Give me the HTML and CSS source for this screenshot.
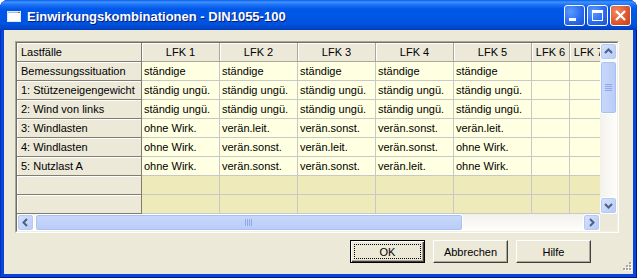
FILE: index.html
```html
<!DOCTYPE html>
<html lang="de">
  <head>
    <meta charset="UTF-8" />
    <title>Einwirkungskombinationen - DIN1055-100</title>
    <link rel="stylesheet" href="styles.css">
  </head>
  <body>
    <div class="window">
      <div class="titlebar">
        <svg class="app-icon" width="16" height="16" viewBox="0 0 16 16">
          <rect x="1.5" y="3.5" width="13" height="10" fill="#fff" stroke="#dfe8fb" />
          <rect x="2" y="4" width="12" height="1" fill="#9fbdf5" />
          <rect x="12" y="4" width="2" height="1" fill="#d24a2a" />
        </svg>
        <span class="title">Einwirkungskombinationen - DIN1055-100</span>
        <div class="caption-buttons">
          <div class="cap-btn">
            <svg width="21" height="21" viewBox="0 0 21 21"><rect x="5" y="13" width="7" height="3" fill="#fff" /></svg>
          </div>
          <div class="cap-btn">
            <svg width="21" height="21" viewBox="0 0 21 21"><rect x="5.5" y="5.5" width="10" height="10" fill="none" stroke="#fff" /><rect x="5" y="5" width="11" height="3" fill="#fff" /></svg>
          </div>
          <div class="cap-btn close">
            <svg width="21" height="21" viewBox="0 0 21 21"><path d="M6 6 L15 15 M15 6 L6 15" stroke="#fff" stroke-width="2.2" /></svg>
          </div>
        </div>
      </div>

      <div class="client">
        <div class="grid-frame">
          <div class="grid-inner">
            <div class="viewport">
              <div class="sheet">
                <div class="cell hd left">Lastfälle</div>
                <div class="cell hd">LFK 1</div>
                <div class="cell hd">LFK 2</div>
                <div class="cell hd">LFK 3</div>
                <div class="cell hd">LFK 4</div>
                <div class="cell hd">LFK 5</div>
                <div class="cell hd">LFK 6</div>
                <div class="cell hd">LFK 7</div>

                <div class="cell rh">Bemessungssituation</div>
                <div class="cell">ständige</div>
                <div class="cell">ständige</div>
                <div class="cell">ständige</div>
                <div class="cell">ständige</div>
                <div class="cell">ständige</div>
                <div class="cell"></div>
                <div class="cell"></div>

                <div class="cell rh">1: Stützeneigengewicht</div>
                <div class="cell">ständig ungü.</div>
                <div class="cell">ständig ungü.</div>
                <div class="cell">ständig ungü.</div>
                <div class="cell">ständig ungü.</div>
                <div class="cell">ständig ungü.</div>
                <div class="cell"></div>
                <div class="cell"></div>

                <div class="cell rh">2: Wind von links</div>
                <div class="cell">ständig ungü.</div>
                <div class="cell">ständig ungü.</div>
                <div class="cell">ständig ungü.</div>
                <div class="cell">ständig ungü.</div>
                <div class="cell">ständig ungü.</div>
                <div class="cell"></div>
                <div class="cell"></div>

                <div class="cell rh">3: Windlasten</div>
                <div class="cell">ohne Wirk.</div>
                <div class="cell">verän.leit.</div>
                <div class="cell">verän.sonst.</div>
                <div class="cell">verän.sonst.</div>
                <div class="cell">verän.leit.</div>
                <div class="cell"></div>
                <div class="cell"></div>

                <div class="cell rh">4: Windlasten</div>
                <div class="cell">ohne Wirk.</div>
                <div class="cell">verän.sonst.</div>
                <div class="cell">verän.leit.</div>
                <div class="cell">verän.sonst.</div>
                <div class="cell">ohne Wirk.</div>
                <div class="cell"></div>
                <div class="cell"></div>

                <div class="cell rh">5: Nutzlast A</div>
                <div class="cell">ohne Wirk.</div>
                <div class="cell">verän.sonst.</div>
                <div class="cell">verän.sonst.</div>
                <div class="cell">verän.leit.</div>
                <div class="cell">ohne Wirk.</div>
                <div class="cell"></div>
                <div class="cell"></div>

                <div class="cell rh"></div>
                <div class="cell blank"></div>
                <div class="cell blank"></div>
                <div class="cell blank"></div>
                <div class="cell blank"></div>
                <div class="cell blank"></div>
                <div class="cell blank"></div>
                <div class="cell blank"></div>

                <div class="cell rh"></div>
                <div class="cell blank"></div>
                <div class="cell blank"></div>
                <div class="cell blank"></div>
                <div class="cell blank"></div>
                <div class="cell blank"></div>
                <div class="cell blank"></div>
                <div class="cell blank"></div>
              </div>
            </div>

            <div class="vscroll">
              <div class="sb-btn">
                <svg width="15" height="15" viewBox="0 0 15 15"><path d="M4 9 L7.5 5.5 L11 9" fill="none" stroke="#4d6185" stroke-width="2" /></svg>
              </div>
              <div class="sb-thumb v">
                <svg width="8" height="8" viewBox="0 0 8 8"><path d="M0 0.5 H7 M0 2.5 H7 M0 4.5 H7 M0 6.5 H7" stroke="#8ea9e8" /></svg>
              </div>
              <div class="sb-track"></div>
              <div class="sb-btn">
                <svg width="15" height="15" viewBox="0 0 15 15"><path d="M4 6 L7.5 9.5 L11 6" fill="none" stroke="#4d6185" stroke-width="2" /></svg>
              </div>
            </div>

            <div class="hscroll">
              <div class="sb-btn">
                <svg width="15" height="15" viewBox="0 0 15 15"><path d="M9 4 L5.5 7.5 L9 11" fill="none" stroke="#4d6185" stroke-width="2" /></svg>
              </div>
              <div class="sb-thumb h">
                <svg width="8" height="8" viewBox="0 0 8 8"><path d="M0.5 0 V7 M2.5 0 V7 M4.5 0 V7 M6.5 0 V7" stroke="#8ea9e8" /></svg>
              </div>
              <div class="sb-track"></div>
              <div class="sb-btn">
                <svg width="15" height="15" viewBox="0 0 15 15"><path d="M6 4 L9.5 7.5 L6 11" fill="none" stroke="#4d6185" stroke-width="2" /></svg>
              </div>
            </div>

            <div class="sb-corner"></div>
          </div>
        </div>

        <div class="actions">
          <button class="btn default"><span class="focus">OK</span></button>
          <button class="btn">Abbrechen</button>
          <button class="btn">Hilfe</button>
        </div>

        <svg class="grip" width="12" height="12" viewBox="0 0 12 12">
          <g fill="#fff">
            <rect x="10" y="2" width="2" height="2" /><rect x="7" y="5" width="2" height="2" /><rect x="10" y="5" width="2" height="2" />
            <rect x="4" y="8" width="2" height="2" /><rect x="7" y="8" width="2" height="2" /><rect x="10" y="8" width="2" height="2" />
          </g>
          <g fill="#aca899">
            <rect x="9" y="1" width="2" height="2" /><rect x="6" y="4" width="2" height="2" /><rect x="9" y="4" width="2" height="2" />
            <rect x="3" y="7" width="2" height="2" /><rect x="6" y="7" width="2" height="2" /><rect x="9" y="7" width="2" height="2" />
          </g>
        </svg>
      </div>
    </div>
  </body>
</html>
```

FILE: styles.css
```css
body {
  margin: 0;
  background: #fff;
  font-family: "Liberation Sans", Arial, sans-serif;
  font-size: 11px;
  color: #000;
}
.window {
  width: 637px;
  height: 278px;
  display: flex;
  flex-direction: column;
  background: #0845d8;
  border-radius: 8px 8px 0 0;
  overflow: hidden;
  box-shadow: inset 1px 0 #0a2fb8, inset -1px 0 #00138c, inset 0 -1px #00138c;
}
.titlebar {
  height: 30px;
  flex: none;
  display: flex;
  align-items: center;
  background: linear-gradient(to bottom, #0a5beb 0px, #3e93ff 2px, #1c70f4 5px, #0058e8 9px, #0056e6 18px, #0052dd 24px, #0046c9 28px, #003dbd 30px);
}
.app-icon {
  margin-left: 6px;
  margin-top: 1px;
}
.title {
  margin-left: 5px;
  color: #fff;
  font-weight: bold;
  font-size: 13px;
  text-shadow: 1px 1px 0 #0a1c74;
  margin-top: 2px;
}
.caption-buttons {
  margin-left: auto;
  margin-right: 6px;
  display: flex;
  gap: 2px;
  margin-top: 1px;
}
.cap-btn {
  width: 21px;
  height: 21px;
  box-sizing: border-box;
  border: 1px solid #fff;
  border-radius: 3px;
  background: radial-gradient(circle at 30% 30%, #5b9bff 0%, #2a68ee 60%, #1c50d8 100%);
  overflow: hidden;
}
.cap-btn svg {
  display: block;
  margin: -1px;
}
.cap-btn.close {
  background: radial-gradient(circle at 30% 30%, #f08a64 0%, #e0582f 55%, #c33f18 100%);
}

.client {
  flex: 1;
  margin: 0 4px 4px;
  background: #ece9d8;
  padding: 11px 0 0 11px;
  position: relative;
  display: flex;
  flex-direction: column;
}

/* grid control */
.grid-frame {
  width: 604px;
  box-sizing: border-box;
  border: 1px solid;
  border-color: #aca899 #fff #fff #aca899;
}
.grid-inner {
  display: grid;
  grid-template-columns: 583px 17px;
  grid-template-rows: 171px 17px;
  border: 1px solid;
  border-color: #716f64 #f1efe2 #f1efe2 #716f64;
}
.viewport {
  overflow: hidden;
}
.sheet {
  display: grid;
  grid-template-columns: 125px repeat(5, 78px) 38px 38px;
  grid-auto-rows: 19px;
}
.cell {
  box-sizing: border-box;
  border-right: 1px solid #c8c8c8;
  border-bottom: 1px solid #c8c8c8;
  background: #ffffe1;
  line-height: 18px;
  padding: 0 2px;
  white-space: nowrap;
  overflow: hidden;
}
.cell.blank {
  background: #eeeab9;
}
.cell.hd {
  background: #ece9d8;
  text-align: center;
  border-right-color: #aca899;
  border-bottom-color: #aca899;
  box-shadow: inset 1px 1px #fff;
}
.cell.hd.left,
.cell.rh {
  text-align: left;
  padding-left: 4px;
  background: #ece9d8;
  border-right-color: #807d70;
  border-bottom-color: #807d70;
  box-shadow: inset 1px 1px #fff;
}

/* scrollbars */
.vscroll,
.hscroll {
  display: flex;
  background: linear-gradient(to right, #f3f1ec, #fefefb);
}
.vscroll {
  flex-direction: column;
}
.hscroll {
  background: linear-gradient(to bottom, #f3f1ec, #fefefb);
}
.sb-btn {
  width: 17px;
  height: 17px;
  flex: none;
  box-sizing: border-box;
  border: 1px solid #fff;
  border-radius: 3px;
  background: linear-gradient(135deg, #d6e2fd, #b8cbf7);
  box-shadow: inset 0 0 0 1px #b6c9f4;
}
.sb-btn svg {
  display: block;
}
.sb-thumb {
  flex: none;
  box-sizing: border-box;
  border: 1px solid #fff;
  border-radius: 3px;
  background: linear-gradient(to right, #c9d8fc, #b9ccf7);
  box-shadow: inset 0 0 0 1px #a9c0f2;
  display: flex;
  align-items: center;
  justify-content: center;
}
.sb-thumb.v {
  height: 53px;
  margin-top: 1px;
}
.sb-thumb.h {
  width: 428px;
  margin-left: 1px;
  background: linear-gradient(to bottom, #c9d8fc, #b9ccf7);
}
.sb-track {
  flex: 1;
}
.sb-corner {
  background: #ece9d8;
}

/* dialog buttons */
.actions {
  display: flex;
  justify-content: flex-end;
  gap: 8px;
  margin-top: 7px;
  padding-right: 42px;
}
.btn {
  width: 75px;
  height: 23px;
  box-sizing: border-box;
  padding: 0;
  font-family: "Liberation Sans", Arial, sans-serif;
  font-size: 11px;
  color: #000;
  background: #ece9d8;
  border: 1px solid;
  border-color: #fff #404040 #404040 #fff;
  box-shadow: inset -1px -1px #aca899;
}
.btn.default {
  display: flex;
  padding: 3px;
  border: 1px solid #000;
  box-shadow: inset 1px 1px #fff, inset -1px -1px #404040, inset -2px -2px #aca899;
}
.focus {
  flex: 1;
  display: flex;
  align-items: center;
  justify-content: center;
  border: 1px dotted #000;
}
.grip {
  position: absolute;
  right: 1px;
  bottom: 1px;
}
```
